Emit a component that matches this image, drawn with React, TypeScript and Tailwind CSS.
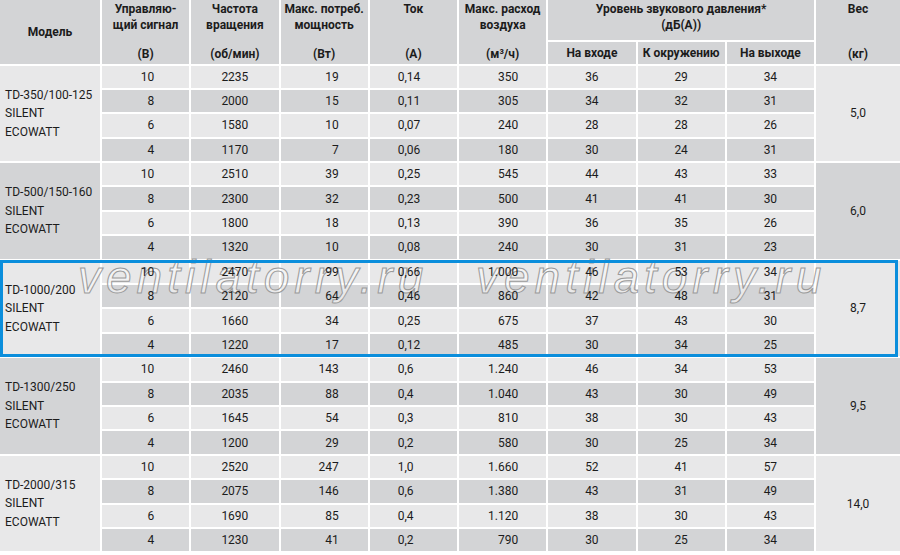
const groups = [
  {
    model: "TD-350/100-125",
    weight: "5,0",
    rows: [
      ["10", "2235", "19", "0,14", "350", "36", "29", "34"],
      ["8", "2000", "15", "0,11", "305", "34", "32", "31"],
      ["6", "1580", "10", "0,07", "240", "28", "28", "26"],
      ["4", "1170", "7", "0,06", "180", "30", "24", "31"],
    ],
  },
  {
    model: "TD-500/150-160",
    weight: "6,0",
    rows: [
      ["10", "2510", "39", "0,25", "545", "44", "43", "33"],
      ["8", "2300", "32", "0,23", "500", "41", "41", "30"],
      ["6", "1800", "18", "0,13", "390", "36", "35", "26"],
      ["4", "1320", "10", "0,08", "240", "30", "31", "23"],
    ],
  },
  {
    model: "TD-1000/200",
    weight: "8,7",
    rows: [
      ["10", "2470", "99", "0,66", "1.000", "46", "53", "34"],
      ["8", "2120", "64", "0,46", "860", "42", "48", "31"],
      ["6", "1660", "34", "0,25", "675", "37", "43", "30"],
      ["4", "1220", "17", "0,12", "485", "30", "34", "25"],
    ],
  },
  {
    model: "TD-1300/250",
    weight: "9,5",
    rows: [
      ["10", "2460", "143", "0,6", "1.240", "46", "34", "53"],
      ["8", "2035", "88", "0,4", "1.040", "43", "30", "49"],
      ["6", "1645", "54", "0,3", "810", "38", "30", "43"],
      ["4", "1200", "29", "0,2", "580", "30", "25", "34"],
    ],
  },
  {
    model: "TD-2000/315",
    weight: "14,0",
    rows: [
      ["10", "2520", "247", "1,0", "1.660", "52", "41", "57"],
      ["8", "2075", "146", "0,6", "1.380", "43", "31", "49"],
      ["6", "1690", "85", "0,4", "1.120", "38", "30", "43"],
      ["4", "1230", "41", "0,2", "790", "30", "25", "34"],
    ],
  },
]

const light = "bg-[#e8e8e9]"
const dark = "bg-[#d3d4d6]"

// per-column alignment of the numbers, as in the original sheet
const align = [
  "justify-end pr-[35px]",
  "justify-center",
  "justify-end pr-[29px]",
  "justify-start pl-[28px]",
  "justify-end pr-[28px]",
  "justify-center",
  "justify-center",
  "justify-center",
]

function HeadCell({ title, unit }: { title: string[]; unit: string }) {
  return (
    <div className={`row-span-2 flex flex-col items-center justify-between pt-[1px] pb-[2px] ${dark}`}>
      <div className="text-center leading-4">
        {title.map((t) => (
          <div key={t}>{t}</div>
        ))}
      </div>
      <div className="leading-4">{unit}</div>
    </div>
  )
}

function Watermark({ className }: { className: string }) {
  return (
    <span
      className={`pointer-events-none absolute top-[254px] font-['Liberation_Sans',Arial,sans-serif] text-[46px] italic leading-none tracking-[5px] text-white/50 [-webkit-text-stroke:1px_#9a9a9a] ${className}`}
    >
      ventilatorry.ru
    </span>
  )
}

export default function App() {
  return (
    <div className="h-[555px] w-[900px] bg-white font-[Roboto,'Liberation_Sans',sans-serif] text-[12px] text-[#1c1c1c]">
      <div className="relative">
        <div className="grid grid-cols-[100px_repeat(8,87.25px)_84px] grid-rows-[40px_21.5px_repeat(20,22.4px)] gap-[2px] bg-white">
          {/* header */}
          <div className={`row-span-2 flex items-center justify-center font-bold ${dark}`}>Модель</div>
          <div className="contents font-bold">
            <HeadCell title={["Управляю-", "щий сигнал"]} unit="(В)" />
            <HeadCell title={["Частота", "вращения"]} unit="(об/мин)" />
            <HeadCell title={["Макс. потреб.", "мощность"]} unit="(Вт)" />
            <HeadCell title={["Ток"]} unit="(А)" />
            <HeadCell title={["Макс. расход", "воздуха"]} unit="(м³/ч)" />
            <div className={`col-span-3 flex flex-col items-center pt-[1px] leading-4 ${dark}`}>
              <div>Уровень звукового давления*</div>
              <div>(дБ(А))</div>
            </div>
            <HeadCell title={["Вес"]} unit="(кг)" />
            <div className={`flex items-center justify-center ${dark}`}>На входе</div>
            <div className={`flex items-center justify-center ${dark}`}>К окружению</div>
            <div className={`flex items-center justify-center ${dark}`}>На выходе</div>
          </div>

          {/* body */}
          {groups.map((g, gi) => {
            const side = gi % 2 === 0 ? light : dark
            return (
              <div key={g.model} className="contents">
                {g.rows.map((r, ri) => {
                  const bg = ri % 2 === 0 ? light : dark
                  return (
                    <div key={ri} className="contents">
                      {ri === 0 && (
                        <div className={`row-span-4 flex flex-col justify-center pl-[5px] leading-[18.5px] ${side}`}>
                          <div className="relative z-10">{g.model}</div>
                          <div className="relative z-10">SILENT</div>
                          <div className="relative z-10">ECOWATT</div>
                        </div>
                      )}
                      {r.map((v, ci) => (
                        <div key={ci} className={`flex items-center ${align[ci]} ${bg}`}>
                          <span className="relative z-10">{v}</span>
                        </div>
                      ))}
                      {ri === 0 && (
                        <div className={`col-start-10 row-span-4 flex items-center justify-center ${side}`}>{g.weight}</div>
                      )}
                    </div>
                  )
                })}
              </div>
            )
          })}
        </div>

        {/* highlighted model + watermark (drawn under the numbers) */}
        <Watermark className="left-[78px]" />
        <Watermark className="left-[476px]" />
        <div className="pointer-events-none absolute left-0 top-[260px] h-[97px] w-[898px] border-[3px] border-[#0b8edc]" />
      </div>
    </div>
  )
}
